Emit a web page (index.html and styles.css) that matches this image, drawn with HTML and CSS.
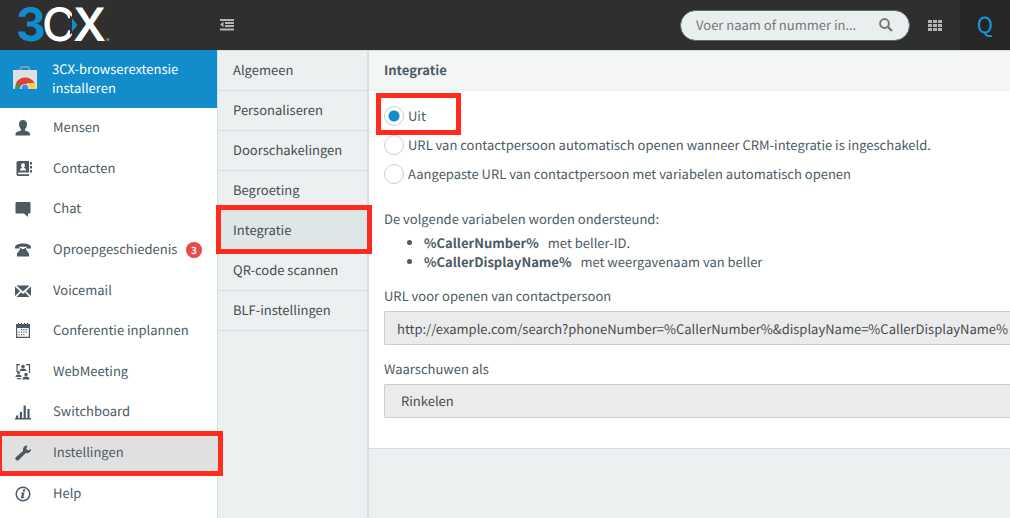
FILE: index.html
```html
<!DOCTYPE html>
<html lang="nl">
<head>
<meta charset="utf-8">
<meta name="viewport" content="width=device-width, initial-scale=1">
<title>3CX Webclient</title>
<link rel="stylesheet" href="styles.css">
</head>
<body>
<header class="topbar">
  <a class="logo" href="#" aria-label="3CX">
    <svg width="96" height="50" viewBox="0 0 96 50">
      <text class="logo-three" x="-2" y="41">3</text>
      <text class="logo-c" x="24" y="41">C</text>
      <path d="M54 0h10v50h-10z" fill="#2f2f2f"/>
      <text class="logo-x" x="55" y="41">X</text>
      <path d="M52 15l10 10-10 10z" fill="#2f2f2f"/>
      <path d="M54 18v14l5.500-7z" fill="#128ccb"/>
      <circle cx="90" cy="39.500" r="1.600" fill="#777"/>
    </svg>
  </a>
  <button class="icon-button toggle" aria-label="Menu inklappen">
    <svg width="14" height="12" viewBox="0 0 14 12" fill="#b4b4b4"><path d="M0 0h14v2H0zM5 3h9v2H5zM5 6h9v2H5zM0 9.500h14v2H0zM3.500 2.800v5.400L0 5.500z"/></svg>
  </button>
  <div class="search">
    <input class="search-input" type="text" aria-label="Zoeken" placeholder="Voer naam of nummer in...">
    <button class="icon-button" aria-label="Zoek">
      <svg width="14" height="14" viewBox="0 0 14 14" fill="none" stroke="#777"><circle cx="5.500" cy="5.500" r="4.400" stroke-width="2"/><path d="M9 9l4 4" stroke-width="2.400"/></svg>
    </button>
  </div>
  <button class="icon-button apps" aria-label="Apps">
    <svg width="14" height="11" viewBox="0 0 14 11" fill="#b4b4b4"><path d="M0 0h4v3H0zM5 0h4v3H5zM10 0h4v3h-4zM0 4h4v3H0zM5 4h4v3H5zM10 4h4v3h-4zM0 8h4v3H0zM5 8h4v3H5zM10 8h4v3h-4z"/></svg>
  </button>
  <button class="avatar">Q</button>
</header>

<div class="layout">
  <aside class="sidebar">
    <a class="promo" href="#">
      <svg width="24" height="24" viewBox="0 0 24 24">
        <path d="M7.500 5V2.500Q7.500 1 9 1h6q1.500 0 1.500 1.500V5" fill="none" stroke="#87a7b7" stroke-width="1.600"/>
        <path d="M0 4h24v18q0 1-1 1H1q-1 0-1-1z" fill="#dde1e4"/>
        <path d="M2 23a10 10 0 0 1 2-7l5 7z" fill="#20a35a"/>
        <path d="M3 17a10.500 10.500 0 0 1 18.500 0l-9 1-5 4z" fill="#db4437"/>
        <path d="M14 17h7.500q1 3 .8 6H14z" fill="#ffcd40"/>
        <path d="M7 23a5 5 0 0 1 10 0z" fill="#f1f1f1"/>
        <path d="M8.500 23a3.600 3.600 0 1 1 7 0z" fill="#4285f4"/>
      </svg>
      <span>3CX-browserextensie installeren</span>
    </a>
    <nav class="menu" aria-label="Hoofdmenu">
      <a href="#"><svg class="icon" viewBox="0 0 16 16"><path d="M8 0c2.500 0 4 1.700 4 4.300 0 2-1 4-2 5v1.200c1.500.8 5 1.200 5 3.500v1.500H.500V14c0-2.300 4-2.700 5.500-3.500V9.300c-1-1-2-3-2-5C4 1.700 5.500 0 8 0z"/></svg><span>Mensen</span></a>
      <a href="#"><svg class="icon" viewBox="0 0 16 16"><path fill-rule="evenodd" d="M3 0h11v11.500H4q-1 0-1 1t1 .7h10V15H3.500Q1.500 15 1.500 13V1.500Q1.500 0 3 0zM8 2.200q-2 0-2 2c0 1 .4 1.800 1 2.300-.2.800-2 .8-2 2.300V9.500h6v-.7c0-1.500-1.800-1.500-2-2.300.6-.5 1-1.300 1-2.300q0-2-2-2z"/><path d="M15 1h2v2.500h-2zM15 5h2v2.500h-2zM15 9h2v2.500h-2z"/></svg><span>Contacten</span></a>
      <a href="#"><svg class="icon" viewBox="0 0 16 16"><path d="M1.500 1h13q1 0 1 1v9.500q0 1-1 1H13V16l-4-3.500H1.500q-1 0-1-1V2q0-1 1-1z"/></svg><span>Chat</span></a>
      <a href="#"><svg class="icon" viewBox="0 0 16 16"><path fill-rule="evenodd" d="M0 5.500C0 2.500 4 1.500 8 1.500s8 1 8 4V6.500h-4.500V4.800h-7v1.700H0zM5 6h1.500v1h3V6H11v1.500l3 4V14.500H2v-3l3-4z"/></svg><span>Oproepgeschiedenis</span><b class="badge">3</b></a>
      <a href="#"><svg class="icon" viewBox="0 0 16 16"><path d="M1.500 2.500h13L8 8.500zM0 3.500l5 4.800L0 13zM16 3.500V13l-5-4.700zM6 9.200l2 1.800 2-1.800 4.500 4.800h-13z"/></svg><span>Voicemail</span></a>
      <a href="#"><svg class="icon" viewBox="0 0 16 16"><path fill-rule="evenodd" d="M1 1h2V0h1v1h2V0h1v1h2V0h1v1h2V0h1v1h2v14H1zM2.200 5v8.800h11.600V5z"/><path d="M6 6h1.200v1.200H6zM8.300 6h1.200v1.200H8.300zM10.600 6h1.200v1.200h-1.200zM3.500 8.500h1.200v1.200H3.500zM6 8.500h1.200v1.200H6zM8.300 8.500h1.200v1.200H8.300zM10.600 8.500h1.200v1.200h-1.200zM3.500 11h1.200v1.200H3.500zM6 11h1.200v1.200H6zM8.300 11h1.200v1.200H8.300z"/></svg><span>Conferentie inplannen</span></a>
      <a href="#"><svg class="icon" viewBox="0 0 16 16"><path d="M2 5V.600h3M11 .600h3.500V9M2 5v3" fill="none" stroke="#4b5a64" stroke-width="1.200"/><circle cx="8" cy="2.500" r="1.800"/><path d="M4.500 7q0-2.500 3.500-2.500T11.500 7z"/><circle cx="3.500" cy="8.500" r="1.500"/><path d="M.500 13q0-2.500 3-2.500t3 2.500z"/><circle cx="11" cy="10.500" r="1.700"/><path d="M7.500 15.500q0-3 3.500-3t3.500 3zM2 14h4v1.200H2z"/></svg><span>WebMeeting</span></a>
      <a href="#"><svg class="icon" viewBox="0 0 16 16"><path d="M0 14h16v1.500H0zM1 11.500h2.200V14H1zM4.800 8H7v6H4.800zM8.600 1.500h2.200V14H8.600zM12.400 5h2.200v9h-2.200z"/></svg><span>Switchboard</span></a>
      <a class="current" href="#" aria-current="page"><svg class="icon" viewBox="0 0 16 16"><path d="M11.500 .500Q13 .500 12 2l-.8 1.500 1 1.600 1.800.2 1.500-1.200q1-.3.300 1.500c-1 2.500-3 3-5 2.500L4 14.800c-2 2-5-.5-3-2.800L8 6c-.5-3 1-5.200 3.500-5.500z"/></svg><span>Instellingen</span></a>
      <a href="#"><svg class="icon" viewBox="0 0 16 16"><circle cx="8" cy="8" r="6.800" fill="none" stroke="#4b5a64" stroke-width="1.500"/><circle cx="9" cy="4.500" r="1.200"/><path d="M6 6.500h3.500l-1.200 4.700h1l-.3 1H5.800l1.200-4.700H5.800z"/></svg><span>Help</span></a>
    </nav>
  </aside>

  <nav class="subnav" aria-label="Instellingen">
    <a href="#">Algemeen</a>
    <a href="#">Personaliseren</a>
    <a href="#">Doorschakelingen</a>
    <a href="#">Begroeting</a>
    <a class="current" href="#" aria-current="page">Integratie</a>
    <a href="#">QR-code scannen</a>
    <a href="#">BLF-instellingen</a>
  </nav>

  <main class="content">
    <form class="panel">
      <h1 class="panel-title">Integratie</h1>
      <div class="panel-body">
        <label class="option marked"><input type="radio" name="mode" checked><span>Uit</span></label>
        <label class="option"><input type="radio" name="mode"><span>URL van contactpersoon automatisch openen wanneer CRM-integratie is ingeschakeld.</span></label>
        <label class="option"><input type="radio" name="mode"><span>Aangepaste URL van contactpersoon met variabelen automatisch openen</span></label>
        <p class="intro">De volgende variabelen worden ondersteund:</p>
        <ul class="variables">
          <li><b>%CallerNumber%</b>met beller-ID.</li>
          <li><b>%CallerDisplayName%</b>met weergavenaam van beller</li>
        </ul>
        <label class="field-label" for="url">URL voor openen van contactpersoon</label>
        <input class="field" id="url" type="text" value="http://example.com/search?phoneNumber=%CallerNumber%&amp;displayName=%CallerDisplayName%">
        <label class="field-label" for="notify">Waarschuwen als</label>
        <select class="field field-select" id="notify"><option>Rinkelen</option></select>
      </div>
    </form>
  </main>
</div>
</body>
</html>
```
FILE: styles.css
```css
* { box-sizing: border-box; }

body {
  margin: 0;
  min-height: 100vh;
  display: flex;
  flex-direction: column;
  background: #ecf0f1;
  color: #4b5a64;
  font: 13px/20px "Noto Sans CJK SC", "Open Sans", sans-serif;
  text-rendering: geometricPrecision;
}

a { color: inherit; text-decoration: none; }

button, input, select { font: inherit; color: inherit; text-rendering: inherit; }

button { border: 0; padding: 0; background: none; cursor: pointer; }

/* Top bar */
.topbar {
  display: flex;
  align-items: center;
  height: 50px;
  background: #2f2f2f;
}

.logo { display: flex; width: 217px; padding-left: 18px; }
.logo svg { overflow: visible; }
.logo text { font-family: Inter, sans-serif; font-size: 46px; }
.logo-three { fill: #128ccb; font-weight: 700; }
.logo-c { fill: #fff; font-weight: 500; }
.logo-x { fill: #fff; font-weight: 600; }

.icon-button { display: flex; align-items: center; justify-content: center; }
.toggle { width: 20px; height: 50px; }

.search {
  display: flex;
  align-items: center;
  width: 230px;
  height: 31px;
  margin-left: auto;
  padding: 0 16px 0 15px;
  border: 1px solid #566a74;
  border-radius: 16px;
  background: #e9efef;
}

.search-input {
  flex: 1;
  min-width: 0;
  padding: 0;
  border: 0;
  outline: 0;
  background: none;
}

.search-input::placeholder { color: #777; opacity: 1; }

.apps { width: 50px; height: 50px; }

.avatar {
  width: 50px;
  height: 50px;
  padding-bottom: 2px;
  background: #282526;
  color: #1496d6;
  font-size: 22px;
}

/* Columns */
.layout { flex: 1; display: flex; }

.sidebar {
  width: 217px;
  flex-shrink: 0;
  display: flex;
  flex-direction: column;
  background: #fff;
}

.promo {
  display: flex;
  align-items: center;
  gap: 15px;
  padding: 9px 13px 11px;
  background: #128ccb;
  color: #fff;
  line-height: 19px;
}

.promo svg { flex-shrink: 0; }

.menu {
  flex: 1;
  display: flex;
  flex-direction: column;
  padding-bottom: 4px;
}

.menu a {
  flex: 1;
  min-height: 40px;
  display: flex;
  align-items: center;
  padding: 0 15px;
}

.menu span { padding-bottom: 2px; }

.icon {
  width: 16px;
  height: 16px;
  flex-shrink: 0;
  margin-right: 22px;
  fill: #4b5a64;
  overflow: visible;
}

.badge {
  width: 16px;
  height: 16px;
  flex-shrink: 0;
  margin-left: auto;
  border-radius: 8px;
  background: #e84a4c;
  color: #fff;
  font-size: 10px;
  line-height: 16px;
  text-align: center;
}

.menu .current { position: relative; background: #e0e0e0; }

.subnav {
  width: 152px;
  flex-shrink: 0;
  border: solid #d6dfe0;
  border-width: 1px 2px 0 1px;
  color: #474b4e;
}

.subnav a {
  display: block;
  padding: 9px 15px 10px;
  border-bottom: 1px solid #d6dfe0;
}

.subnav .current { position: relative; background: #dfe6e8; }

/* Red highlight frames */
.menu .current::after,
.subnav .current::after,
.marked::after {
  content: "";
  position: absolute;
  border: 5px solid #ff2b1c;
  z-index: 1;
}

.menu .current::after { inset: -2px -6px -3px -3px; }
.subnav .current::after { inset: -6px -5px -4px -2px; }

/* Settings panel */
.content { flex: 1; min-width: 0; }

.panel {
  border: solid #d6dfe0;
  border-width: 1px 0;
  background: #fff;
}

.panel-title {
  margin: 0;
  padding: 9px 15px 10px;
  border-bottom: 1px solid #e9eded;
  background: #f4f6f6;
  font-size: 13px;
  line-height: 20px;
}

.panel-body { padding: 10px 0 30px 15px; }

.option { display: flex; align-items: center; gap: 4px; min-height: 29px; }

.option input {
  appearance: none;
  flex-shrink: 0;
  width: 20px;
  height: 20px;
  margin: 0;
  border: 1px solid #c5d2d6;
  border-radius: 50%;
  background: #fff;
}

.option input:checked { background: radial-gradient(circle, #128ccb 5px, #fff 6px); }

.marked { position: relative; width: 70px; }
.marked::after { inset: -8px -7px -5px -8px; }

.intro { margin: 21px 0 4px; }

.variables { margin: 0 0 15px; padding-left: 40px; line-height: 19px; }
.variables b { margin-right: 9px; }

.field-label { display: block; margin-bottom: 5px; }

.field {
  display: block;
  width: 100%;
  height: 34px;
  margin-bottom: 14px;
  padding: 0 0 0 12px;
  border: 1px solid #c1d0d5;
  border-right: 0;
  border-radius: 2px 0 0 2px;
  outline: 0;
  background: #ebebeb;
  color: #474b4e;
}

.field-select { appearance: none; margin-bottom: 0; padding: 0 16px; }
```
